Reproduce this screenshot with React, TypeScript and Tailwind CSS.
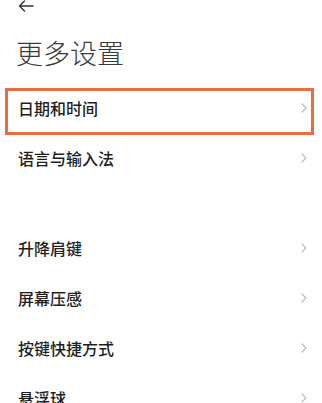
import React from "react";

const font = { fontFamily: '"Noto Sans CJK SC", "Noto Sans", sans-serif' };

function Chevron() {
  return (
    <svg width="6" height="10" viewBox="0 0 6 10" fill="none">
      <path d="M1 1 L5 5 L1 9" stroke="#bdbdbd" strokeWidth="1.2" strokeLinecap="round" strokeLinejoin="round" />
    </svg>
  );
}

function Row({ label }: { label: string }) {
  return (
    <div className="flex h-[50px] items-center justify-between pl-[18px] pr-[15px]">
      <span className="text-[16px] font-medium text-[#1f1f1f] leading-none">{label}</span>
      <Chevron />
    </div>
  );
}

export default function App() {
  return (
    <div className="relative h-[403px] w-[322px] overflow-hidden bg-white" style={font}>
      <div className="h-[13px] pl-[18px]">
        <svg width="16" height="12" viewBox="0 0 16 12" fill="none">
          <path d="M15 6 H1.5 M6.5 1 L1.5 6 L6.5 11" stroke="#333" strokeWidth="1.4" strokeLinecap="round" strokeLinejoin="round" />
        </svg>
      </div>
      <div className="mt-[20px] h-[40px] pl-[16px] text-[27px] font-light leading-[40px] text-[#3a3a3a]">
        更多设置
      </div>
      <div className="mt-[10px]">
        <Row label="日期和时间" />
        <Row label="语言与输入法" />
        <div className="h-[40px]" />
        <Row label="升降肩键" />
        <Row label="屏幕压感" />
        <Row label="按键快捷方式" />
        <Row label="悬浮球" />
      </div>
      <div className="absolute left-[5px] top-[88px] h-[47px] w-[309px] border-[3px] border-[#e96d3f]" />
    </div>
  );
}
